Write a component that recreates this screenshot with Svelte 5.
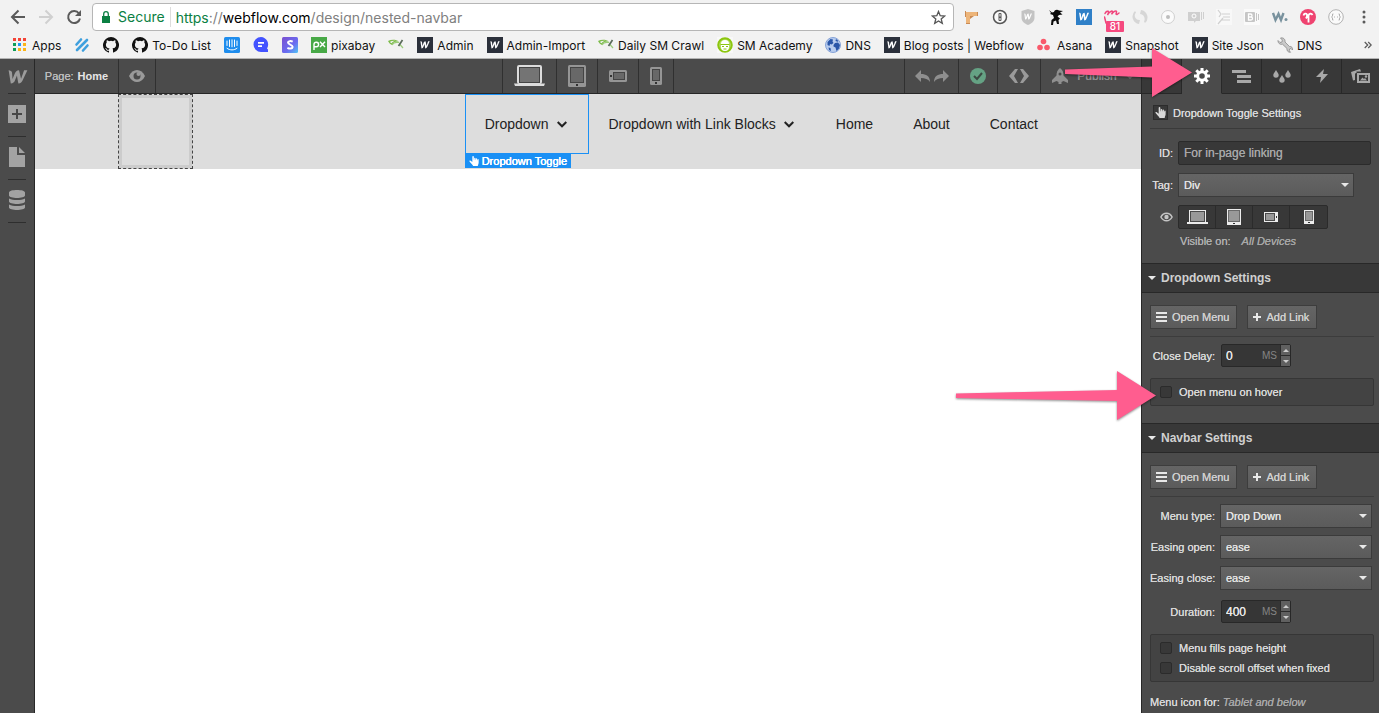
<script lang="ts">
  type Bookmark = { icon: string; label?: string; title: string };

  const bookmarks: Bookmark[] = [
    { icon: 'apps', label: 'Apps', title: 'Apps' },
    { icon: 'stripes', title: 'Help Scout' },
    { icon: 'github', title: 'GitHub' },
    { icon: 'github', label: 'To-Do List', title: 'To-Do List' },
    { icon: 'intercom', title: 'Intercom' },
    { icon: 'chat', title: 'Chat' },
    { icon: 'stripe', title: 'Stripe' },
    { icon: 'pixabay', label: 'pixabay', title: 'pixabay' },
    { icon: 'leaf', title: 'Crawl' },
    { icon: 'webflow', label: 'Admin', title: 'Admin' },
    { icon: 'webflow', label: 'Admin-Import', title: 'Admin-Import' },
    { icon: 'leaf', label: 'Daily SM Crawl', title: 'Daily SM Crawl' },
    { icon: 'academy', label: 'SM Academy', title: 'SM Academy' },
    { icon: 'globe', label: 'DNS', title: 'DNS' },
    { icon: 'webflow', label: 'Blog posts | Webflow', title: 'Blog posts' },
    { icon: 'asana', label: 'Asana', title: 'Asana' },
    { icon: 'webflow', label: 'Snapshot', title: 'Snapshot' },
    { icon: 'webflow', label: 'Site Json', title: 'Site Json' },
    { icon: 'wrench', label: 'DNS', title: 'DNS tools' }
  ];

  const extensions = ['beam', 'onepass', 'shield', 'ninja', 'wblue', 'script', 'swirl', 'disc', 'bubble', 'sheet', 'bold', 'wdot', 'tee', 'braces'];
  const devices = ['laptop', 'tablet', 'landscape', 'phone'];

  let device = $state('laptop');
  let openOnHover = $state(false);
  let fillsHeight = $state(false);
  let disableOffset = $state(false);
  let closeDelay = $state('0');
  let duration = $state('400');
</script>

{#snippet webflowMark(color: string)}
  <path fill={color} d="M15.3 1.2s-2.3 7-2.5 7.6c-.1-.6-1.7-7.6-1.7-7.6-1.9 0-2.9 1.3-3.4 2.7L5.7 9.1c0-.6-.3-5.3-.4-5.8C5.100 2 4 1.200 2.500 1.200L4.300 13c1.900 0 2.900-1.300 3.400-2.700l1.700-4.500c0 .4 1.200 7.200 1.200 7.200 1.900 0 2.900-1.200 3.400-2.600L18 1.200z" />
{/snippet}

{#snippet bookmarkIcon(name: string)}
  <svg class="bm-icon" viewBox="0 0 16 16" aria-hidden="true">
    {#if name === 'apps'}
      <g>
        <path fill="#f44336" d="M1 1h3v3H1zM6 1h3v3H6zM11 1h3v3h-3z" />
        <path fill="#0f9d58" d="M1 6h3v3H1zM1 11h3v3H1z" />
        <path fill="#2196f3" d="M6 6h3v3H6z" />
        <path fill="#fbb417" d="M11 6h3v3h-3zM6 11h3v3H6zM11 11h3v3h-3z" />
      </g>
    {:else if name === 'stripes'}
      <g stroke="#3fa0de" stroke-width="2.600" stroke-linecap="round">
        <path d="M2.500 7.500L7 2.500M3 13L13 3M9 13.500L13.500 8.500" />
      </g>
    {:else if name === 'github'}
      <path fill="#111" d="M8 0a8 8 0 0 0-2.530 15.590c.4.070.550-.170.550-.380v-1.490c-2.230.480-2.700-.950-2.700-.950-.360-.920-.890-1.170-.890-1.170-.730-.500.050-.490.050-.490.810.060 1.230.830 1.230.830.720 1.230 1.880.870 2.340.670.070-.520.280-.870.510-1.070-1.780-.200-3.640-.890-3.640-3.950 0-.870.310-1.590.820-2.150-.080-.200-.360-1.020.080-2.120 0 0 .670-.210 2.200.820a7.600 7.600 0 0 1 4 0c1.530-1.040 2.200-.820 2.200-.820.440 1.100.160 1.920.080 2.120.510.560.820 1.270.820 2.150 0 3.070-1.870 3.750-3.650 3.950.290.250.540.730.540 1.480v2.190c0 .210.150.460.550.380A8 8 0 0 0 8 0z" />
    {:else if name === 'intercom'}
      <rect width="16" height="16" rx="1.500" fill="#1f8ded" />
      <g stroke="#fff" stroke-linecap="round" fill="none">
        <path d="M3 4v4.500M5.500 3v6.500M8 2.800v7M10.500 3v6.500M13 4v4.500M3 11.300c3 2.200 7 2.200 10 0" />
      </g>
    {:else if name === 'chat'}
      <path fill="#4353ff" d="M8 0a7.500 7.500 0 1 0 0 15h7v-2.500l-1-1A7.500 7.500 0 0 0 8 0z" />
      <path fill="#fff" d="M5 5h6v1.800H5zM5 8.200h4V10H5z" />
    {:else if name === 'stripe'}
      <defs>
        <linearGradient id="stripe-fill" x1="0" y1="0" x2="1" y2="1">
          <stop offset="0" stop-color="#7a4fd0" />
          <stop offset=".6" stop-color="#6a6cf0" />
          <stop offset="1" stop-color="#53c6f5" />
        </linearGradient>
      </defs>
      <rect width="16" height="16" rx="1.500" fill="url(#stripe-fill)" />
      <path fill="none" stroke="#fff" stroke-width="2" d="M10.700 4.700C9 3.900 6 3.700 6 5.600c0 2.200 4.600 1.800 4.600 4.200 0 2.200-3.300 2-5.200 1" />
    {:else if name === 'pixabay'}
      <rect width="16" height="16" fill="#48a947" />
      <path fill="none" stroke="#fff" stroke-width="1.400" d="M3 13V7.300a2.300 2.300 0 1 1 2.300 2.500H3M9 4.800l5 5.200M14 4.800L9 10" />
    {:else if name === 'leaf'}
      <path fill="#7dbb4a" d="M0 4C3.500 2 8 2.300 11 4.500 7.500 4 5.500 5 4 8 2 7 1 6 0 4zm2 .7C2.500 5.700 3 6 3.600 6.300 4.500 4.700 6 4 7.500 3.800 5.500 3.500 3.500 3.900 2 4.700z" />
      <path fill="none" stroke="#9ccc7b" stroke-width="1.200" d="M4 8c1.500-3 4-3 7-2.500M11.500 7l3.500 4" />
      <path fill="none" stroke="#5b6b5b" stroke-width="1.700" d="M14.500 3L10.500 9" />
    {:else if name === 'webflow'}
      <rect width="16" height="16" fill="#2b303b" />
      <g transform="translate(1.900 3.600) scale(.6)">{@render webflowMark('#fff')}</g>
    {:else if name === 'academy'}
      <rect width="16" height="16" fill="#f8f8f8" />
      <circle cx="8" cy="8" r="6.800" fill="#b8dd68" stroke="#8cc610" stroke-width="2" />
      <path fill="#fff" d="M4 7a4 4 0 0 1 8 0v3a4 4 0 0 1-8 0z" />
      <path fill="none" stroke="#8cc610" d="M3.500 7.500h9M5 9.500h2M9 9.500h2M6.500 12h3" />
    {:else if name === 'globe'}
      <circle cx="8" cy="8" r="7.500" fill="#b9cdee" stroke="#86a3d8" />
      <path fill="#2a56a8" d="M2.500 5l3-3 2.500.5-.5 2 1 1.500-2 1.500L5 7l-.5 2-2-1zM8.500 8l1.500-2 3-.5 2 2.500-1 3.500-2.500 2.500-1-3.500-2-1zM11 2l2.500 2-1 .8L10.500 4zM3.500 10.500l2 .5.5 3-2-1z" />
    {:else if name === 'asana'}
      <g fill="#f9596b">
        <circle cx="6.500" cy="4.500" r="2.800" /><circle cx="3" cy="10.500" r="2.800" /><circle cx="10" cy="10.500" r="2.800" />
      </g>
    {:else if name === 'wrench'}
      <path fill="#c9c9c9" stroke="#8a8a8a" stroke-width=".8" d="M1 3.500L3 5.500 5 5 5.300 3 3.500 1C6 .3 8.500 2 8 5l4.500 4.500c2-.5 3.500 1.500 3 3.500L14 11.500l-1.500.5-.2 1.800 1.200 1.500C11 15.500 9.500 13.500 10 11.500L5.500 7.200C3 8 .8 6 1 3.500z" />
    {/if}
  </svg>
{/snippet}

{#snippet extensionIcon(name: string)}
  <svg width="16" height="16" viewBox="0 0 16 16" aria-hidden="true">
    {#if name === 'beam'}
      <path fill="#edb57a" d="M1 3h13v4H6v8H2V7H1z" />
      <path fill="#c98a55" d="M1 2h1v6H1zM2 14h4v1H2zM13 3h1v4h-1zM6 7h4l-4 3z" />
    {:else if name === 'onepass'}
      <circle cx="8" cy="8" r="6.500" fill="#fafafa" stroke="#555" stroke-width="1.500" />
      <rect x="6.500" y="4" width="3" height="8" rx="1" fill="#555" />
      <path stroke="#fafafa" d="M8 5v2.500M8 9v2" />
    {:else if name === 'shield'}
      <path fill="#c3c3c3" d="M8 0l6.500 2v6.500c0 4-3 6-6.500 7.500-3.500-1.500-6.500-3.500-6.500-7.500V2z" />
      <g transform="translate(3 4) scale(.5)">{@render webflowMark('#fff')}</g>
    {:else if name === 'ninja'}
      <path fill="#0b0b0b" d="M1 1l3 2.500L6 3C6.500.5 9.500 0 11 1.500l4 .5-3 1.500 2.500 2-3.500.5-1.500 1.500 2.500 2-1.500 1.500.5 4H9l-1-3.500-2.500 1L5 16H3l.5-5L6 9 5 6 2 5l1-1z" />
    {:else if name === 'wblue'}
      <rect width="16" height="16" fill="#2f80c8" />
      <g transform="translate(1.500 3.100) scale(.64)">{@render webflowMark('#fff')}</g>
    {:else if name === 'script'}
      <path fill="none" stroke="#f0457c" stroke-width="1.500" stroke-linecap="round" d="M1 4.500C2 2 4.500 1.500 4.500 3S3.500 6 3.500 6C5 3 8.500.8 8.500 2.800c0 1-1 2.500-1 2.500C9 3 12 .8 12.500 2.500 12.800 4 11 5.500 13 5.500l2-1.500M.5 8l1 4 .5 2" />
    {:else if name === 'swirl'}
      <path fill="#d6d6d6" d="M7 15A7.500 7.500 0 0 1 3 2l1 1.500A4.500 4.500 0 0 0 8 11zM9 1a7.500 7.500 0 0 1 4 13l-1-1.500A5 5 0 0 0 8 5z" />
    {:else if name === 'disc'}
      <circle cx="8" cy="8" r="6.500" fill="#fbfbfb" stroke="#d0d0d0" />
      <circle cx="8" cy="8" r="2" fill="#bdbdbd" />
    {:else if name === 'bubble'}
      <path fill="#cfcfcf" d="M0 3h12v9H8l-2 2v-2H0zM13 3h1v8h-1zM15 3h1v7h-1z" />
      <circle cx="6" cy="7" r="2" fill="none" stroke="#fff" />
    {:else if name === 'sheet'}
      <rect width="16" height="16" fill="#f8f8f8" />
      <path fill="none" stroke="#d0d0d0" stroke-width="1.200" d="M2 1l3 4-2 3M6 5h8M7 8h7M5 11h9M2 15L7 9" />
    {:else if name === 'bold'}
      <rect width="16" height="16" fill="#fafafa" />
      <rect x="1" y="3" width="10" height="10" rx="1" fill="#c6c6c6" />
      <path fill="none" stroke="#fff" stroke-width="1.300" d="M4.500 5h2a1.400 1.400 0 0 1 0 3h-2H7a1.400 1.400 0 0 1 0 3H4.500z" />
      <path stroke="#c6c6c6" d="M12.500 4v8M14.500 5v6" />
    {:else if name === 'wdot'}
      <path fill="none" stroke="#79929e" stroke-width="2.400" d="M1 4l2.500 7L6.500 5l2.500 6 2.500-7" />
      <circle cx="14" cy="10.500" r="1.500" fill="#79929e" />
    {:else if name === 'tee'}
      <circle cx="8" cy="8" r="8" fill="#ef4370" />
      <path fill="none" stroke="#fff" stroke-width="1.800" d="M3.500 6.500C4 4.500 6 4 7 5.500v2l-1 2M12.500 6C11.500 4 9 4.500 8.500 6.500v7" />
    {:else if name === 'braces'}
      <circle cx="8" cy="8" r="7.300" fill="#fafafa" stroke="#b2b2b2" />
      <path fill="none" stroke="#b2b2b2" d="M5.500 5h-1v2l-1 1 1 1v2h1M10.500 5h1v2l1 1-1 1v2h-1M6 8h1M9 8h1" />
    {/if}
  </svg>
{/snippet}

{#snippet topDevice(name: string)}
  {#if name === 'laptop'}
    <svg width="31" height="22" viewBox="0 0 31 22" aria-hidden="true">
      <rect x="4" y="1" width="23" height="17" rx="1" fill="#747474" stroke="#dcdcdc" stroke-width="2" />
      <rect x="5.500" y="2.500" width="20" height="15" fill="none" stroke="#444" />
      <path fill="#dcdcdc" d="M0 18.500h31l-1 2.500H1z" />
    </svg>
  {:else if name === 'tablet'}
    <svg width="18" height="22" viewBox="0 0 18 22" aria-hidden="true">
      <rect width="18" height="22" rx="1.500" fill="#959595" />
      <rect x="2.500" y="2.500" width="13" height="15" fill="#686868" stroke="#444" />
      <rect x="8" y="19" width="2" height="2" fill="#333" />
    </svg>
  {:else if name === 'landscape'}
    <svg width="18" height="12" viewBox="0 0 18 12" aria-hidden="true">
      <rect width="18" height="12" rx="1.500" fill="#959595" />
      <rect x="4.500" y="2.500" width="11" height="7" fill="#686868" stroke="#444" />
      <rect x="1" y="5" width="2" height="2" fill="#333" />
    </svg>
  {:else}
    <svg width="12" height="18" viewBox="0 0 12 18" aria-hidden="true">
      <rect width="12" height="18" rx="1.500" fill="#959595" />
      <rect x="2.500" y="2.500" width="7" height="11" fill="#686868" stroke="#444" />
      <rect x="5" y="15" width="2" height="2" fill="#333" />
    </svg>
  {/if}
{/snippet}

{#snippet panelDevice(name: string)}
  {#if name === 'laptop'}
    <svg width="21" height="14" viewBox="0 0 21 14" aria-hidden="true">
      <path fill="#ececec" d="M2 0h17v12h2v2H0v-2h2z" />
      <rect x="3.500" y="1.500" width="14" height="10" fill="#999" stroke="#4a4a4a" />
    </svg>
  {:else if name === 'tablet'}
    <svg width="14" height="16" viewBox="0 0 14 16" aria-hidden="true">
      <rect width="14" height="16" fill="#ececec" />
      <rect x="1.500" y="1.500" width="11" height="11" fill="#999" stroke="#6a6a6a" />
      <rect x="6" y="14" width="2" height="1" fill="#333" />
    </svg>
  {:else if name === 'landscape'}
    <svg width="14" height="10" viewBox="0 0 14 10" aria-hidden="true">
      <rect width="14" height="10" fill="#ececec" />
      <rect x="1.500" y="1.500" width="9" height="7" fill="#999" stroke="#4a4a4a" />
      <rect x="12" y="4" width="1" height="2" fill="#333" />
    </svg>
  {:else}
    <svg width="10" height="14" viewBox="0 0 10 14" aria-hidden="true">
      <rect width="10" height="14" fill="#ececec" />
      <rect x="1.500" y="1.500" width="7" height="9" fill="#999" stroke="#6a6a6a" />
      <rect x="4" y="12" width="2" height="1" fill="#333" />
    </svg>
  {/if}
{/snippet}

{#snippet panelEye()}
  <svg width="13" height="10" viewBox="0 0 13 10" aria-hidden="true">
    <path fill="none" stroke="#c4c4c4" stroke-width="1.500" d="M.9 5c2.600-5 8.600-5 11.200 0-2.600 5-8.600 5-11.200 0z" />
    <circle cx="6.500" cy="5" r="2.200" fill="#c4c4c4" />
  </svg>
{/snippet}

{#snippet hand(size: number)}
  <svg width={size} height={size} viewBox="0 0 12 12" aria-hidden="true">
    <path fill="currentColor" d="M4 1a.9.900 0 0 1 1.800 0v3.500h.4V3a.8.800 0 0 1 1.600 0v1.500h.4v-1a.8.800 0 0 1 1.600 0v1.500h.4v-.6a.7.700 0 0 1 1.400 0V8c0 1.500-1 2.400-1 4H5C4.500 10.500 1.500 8 .6 6.600c-.5-1 .6-1.600 1.400-.9L4 7.300z" />
  </svg>
{/snippet}

{#snippet caret()}
  <svg class="caret" width="8" height="4" viewBox="0 0 8 4" aria-hidden="true"><path fill="#e8e8e8" d="M0 0h8L4 4z" /></svg>
{/snippet}

{#snippet chevron()}
  <svg width="10" height="7" viewBox="0 0 10 7" aria-hidden="true"><path fill="none" stroke="#222" stroke-width="2" d="M.7 1L5 5.300 9.300 1" /></svg>
{/snippet}

{#snippet menuButtons()}
  <div class="buttons">
    <button class="btn" type="button">
      <svg width="11" height="11" viewBox="0 0 11 11" aria-hidden="true"><path fill="#e8e8e8" d="M0 0h11v2H0zM0 4h11v2H0zM0 8h11v2H0z" /></svg>
      Open Menu
    </button>
    <button class="btn" type="button">
      <svg width="8" height="8" viewBox="0 0 8 8" aria-hidden="true"><path fill="#e8e8e8" d="M3 0h2v3h3v2H5v3H3V5H0V3h3z" /></svg>
      Add Link
    </button>
  </div>
{/snippet}

{#snippet stepper()}
  <span class="steps">
    <button type="button" aria-label="Increase"><svg width="6" height="3" viewBox="0 0 6 3"><path fill="#ccc" d="M0 3h6L3 0z" /></svg></button>
    <button type="button" aria-label="Decrease"><svg width="6" height="3" viewBox="0 0 6 3"><path fill="#ccc" d="M0 0h6L3 3z" /></svg></button>
  </span>
{/snippet}

<div class="window">
  <header class="chrome">
    <div class="toolbar">
      <nav class="history" aria-label="History">
        <button type="button" aria-label="Back"><svg width="16" height="16" viewBox="0 0 16 16"><path fill="none" stroke="#5a5a5a" stroke-width="2" d="M15 8H2.500M8.500 1.500L2 8l6.500 6.500" /></svg></button>
        <button type="button" aria-label="Forward"><svg width="16" height="16" viewBox="0 0 16 16"><path fill="none" stroke="#d0d0d0" stroke-width="2" d="M1 8h12.500M7.500 1.500L14 8l-6.500 6.500" /></svg></button>
        <button type="button" aria-label="Reload"><svg width="16" height="16" viewBox="0 0 16 16"><path fill="none" stroke="#5a5a5a" stroke-width="2" d="M13 4.500A6 6 0 1 0 14 9.500" /><path fill="#5a5a5a" d="M15 1v6H9z" /></svg></button>
      </nav>
      <div class="omnibox">
        <svg width="8" height="12" viewBox="0 0 8 12" aria-hidden="true"><path fill="#0b8043" d="M0 5h8v7H0z" /><path fill="none" stroke="#0b8043" stroke-width="1.300" d="M1.700 5V3a2.300 2.300 0 0 1 4.600 0v2" /></svg>
        <span class="secure">Secure</span>
        <span class="url"><span class="scheme">https</span>://<span class="host">webflow.com</span>/design/nested-navbar</span>
        <button class="star" type="button" aria-label="Bookmark this page"><svg width="15" height="15" viewBox="0 0 15 15"><path fill="none" stroke="#555" stroke-width="1.300" d="M7.500 1.500l1.700 4.200 4.500.3-3.500 2.900 1.100 4.400-3.800-2.400-3.800 2.400 1.100-4.400L1.300 6l4.500-.3z" /></svg></button>
      </div>
      <div class="extensions">
        {#each extensions as name}
          <button type="button" aria-label={name}>
            {@render extensionIcon(name)}
            {#if name === 'script'}<span class="badge">81</span>{/if}
          </button>
        {/each}
        <button type="button" aria-label="Menu"><svg width="16" height="16" viewBox="0 0 16 16"><g fill="#5a5a5a"><circle cx="8" cy="3" r="1.500" /><circle cx="8" cy="8" r="1.500" /><circle cx="8" cy="13" r="1.500" /></g></svg></button>
      </div>
    </div>
    <nav class="bookmarks" aria-label="Bookmarks">
      {#each bookmarks as item}
        <a href="#top" aria-label={item.title}>{@render bookmarkIcon(item.icon)}{#if item.label}<span>{item.label}</span>{/if}</a>
      {/each}
      <button class="more" type="button" aria-label="More bookmarks"><svg width="8" height="8" viewBox="0 0 8 8"><path fill="none" stroke="#5a5a5a" stroke-width="1.200" d="M.7 1l3 3-3 3M4.200 1l3 3-3 3" /></svg></button>
    </nav>
  </header>

  <div class="designer">
    <aside class="rail">
      <button class="logo" type="button" aria-label="Webflow"><svg width="20" height="14" viewBox="2 1 16.500 12.500" preserveAspectRatio="none">{@render webflowMark('#9c9c9c')}</svg></button>
      <button type="button" aria-label="Add element"><svg width="18" height="18" viewBox="0 0 18 18"><path fill="#a3a3a3" d="M0 0h18v18H0z" /><path fill="#474747" d="M8 4h2v4h4v2h-4v4H8v-4H4V8h4z" /></svg></button>
      <button type="button" aria-label="Pages"><svg width="16" height="20" viewBox="0 0 16 20"><path fill="#a3a3a3" d="M0 0h8v8h8v12H0zM10 0l6 6h-6z" /></svg></button>
      <button type="button" aria-label="Collections"><svg width="16" height="20" viewBox="0 0 16 20"><path fill="#a3a3a3" d="M0 2.500C0-.8 16-.8 16 2.500v3c0 3.300-16 3.300-16 0zM0 8.500c4 2 12 2 16 0v3c0 3.300-16 3.300-16 0zM0 14.500c4 2 12 2 16 0v3c0 3.300-16 3.300-16 0z" /></svg></button>
    </aside>

    <main class="work">
      <div class="topbar">
        <div class="group">
          <button class="cell page" type="button">Page: <b>Home</b></button>
          <button class="cell preview" type="button" aria-label="Preview">
            <svg width="16" height="12" viewBox="0 0 16 12"><path fill="#9a9a9a" d="M0 6C3.500-2 12.500-2 16 6c-3.500 8-12.500 8-16 0z" /><circle cx="8" cy="6" r="3.500" fill="#4b4b4b" /><circle cx="9.500" cy="4" r="2" fill="#9a9a9a" /></svg>
          </button>
        </div>
        <div class="group devices">
          {#each devices as name}
            <button class="cell {name}" type="button" aria-label={name} aria-pressed={device === name} onclick={() => (device = name)}>{@render topDevice(name)}</button>
          {/each}
        </div>
        <div class="group actions">
          <button class="cell undo" type="button" aria-label="Undo and redo">
            <svg width="34" height="14" viewBox="0 0 34 14"><path fill="#8f8f8f" d="M0 7l6-6v4c5 0 9 2 9 8-2-3-5-4-9-4v4zM34 7l-6-6v4c-5 0-9 2-9 8 2-3 5-4 9-4v4z" /></svg>
          </button>
          <button class="cell saved" type="button" aria-label="Saved">
            <svg width="16" height="16" viewBox="0 0 16 16"><circle cx="8" cy="8" r="8" fill="#65a284" /><path fill="none" stroke="#3c4a43" stroke-width="2" d="M4 8l3 3 5-6" /></svg>
          </button>
          <button class="cell code" type="button" aria-label="Code">
            <svg width="20" height="14" viewBox="0 0 20 14"><path fill="#9a9a9a" d="M6 0h3L5 7l4 7H6L0 7zM14 0h-3l4 7-4 7h3l6-7z" /></svg>
          </button>
          <button class="cell publish" type="button">
            <svg width="16" height="16" viewBox="0 0 16 16" aria-hidden="true"><path fill="#8f8f8f" d="M8 0c3 2 3.500 5 3.500 7.500L16 12v3l-4.500-2-2 1v2h-3v-2l-2-1L0 15v-3l4.500-4.500C4.500 5 5 2 8 0z" /><circle cx="8" cy="6" r="1.500" fill="#4b4b4b" /></svg>
            Publish
            <svg width="8" height="5" viewBox="0 0 8 5" aria-hidden="true"><path fill="none" stroke="#777" stroke-width="1.500" d="M1 1l3 3 3-3" /></svg>
          </button>
        </div>
      </div>

      <div class="canvas">
        <div class="navbar">
          <div class="container">
            <div class="brand"></div>
            <nav class="links" aria-label="Site">
              <div class="toggle selected">
                Dropdown
                {@render chevron()}
                <span class="tag">{@render hand(10)}Dropdown Toggle</span>
              </div>
              <div class="toggle">
                Dropdown with Link Blocks
                {@render chevron()}
              </div>
              <a href="#home">Home</a>
              <a href="#about">About</a>
              <a href="#contact">Contact</a>
            </nav>
          </div>
        </div>
      </div>
    </main>

    <aside class="panel">
      <div class="tabs">
        <button type="button" aria-label="Style"><svg width="14" height="14" viewBox="0 0 14 14"><path fill="#a8a8a8" d="M14 0L6 7l2 2zM5 8c-3 0-2 4-5 4 3 3 8 1 7-2z" /></svg></button>
        <button class="active" type="button" aria-label="Settings">
          <svg width="16" height="16" viewBox="0 0 16 16">
            <circle cx="8" cy="8" r="4.300" fill="none" stroke="#fff" stroke-width="3" />
            <path stroke="#fff" stroke-width="3" d="M8 0v3M8 13v3M0 8h3M13 8h3M2.300 2.300l2.200 2.200M11.500 11.500l2.200 2.200M2.300 13.700l2.200-2.200M11.500 4.500l2.200-2.200" />
          </svg>
        </button>
        <button type="button" aria-label="Navigator"><svg width="19" height="13" viewBox="0 0 19 13"><path fill="#a8a8a8" d="M0 0h14v3H0zM5 5h14v3H5zM5 10h14v3H5z" /></svg></button>
        <button type="button" aria-label="Style manager"><svg width="18" height="14" viewBox="0 0 18 14"><path fill="#a8a8a8" d="M3 1c1.500 2.500 2.700 3.500 2.700 5a2.700 2.700 0 0 1-5.400 0C.3 4.500 1.500 3.500 3 1zM9 6c1.500 2.500 2.700 3.500 2.700 5a2.700 2.700 0 0 1-5.400 0c0-1.500 1.200-2.500 2.700-5zM15 1c1.500 2.500 2.700 3.500 2.700 5a2.700 2.700 0 0 1-5.400 0c0-1.500 1.200-2.500 2.700-5z" /></svg></button>
        <button type="button" aria-label="Interactions"><svg width="12" height="14" viewBox="0 0 12 14"><path fill="#a8a8a8" d="M8 0L0 8h5l-1 6 8-9H7z" /></svg></button>
        <button type="button" aria-label="Assets"><svg width="19" height="15" viewBox="0 0 19 15"><path fill="#a8a8a8" fill-rule="evenodd" d="M0 3l9-3 1 2.500H5.500V4L4 4.500V11l-2 .5zM6 4h13v10H6zm2 2v6h9V6zM9 11.500l2.500-3L13 10l1-1 2 2.500z" /><circle cx="15" cy="7.500" r="1.200" fill="#a8a8a8" /></svg></button>
        <div class="pointer tabs-pointer"><svg viewBox="0 0 132 54" aria-hidden="true"><path fill="#ff5d8f" d="M2 23.500L89 20.500V2l40 24.500L89 51V31.500L2 28z" /></svg></div>
      </div>

      <section class="element">
        <h1><span class="chip">{@render hand(11)}</span>Dropdown Toggle Settings</h1>
        <div class="row narrow">
          <label for="el-id">ID:</label>
          <input id="el-id" class="text" type="text" placeholder="For in-page linking" />
        </div>
        <div class="row narrow tag-row">
          <label for="el-tag">Tag:</label>
          <span class="select"><select id="el-tag"><option>Div</option></select>{@render caret()}</span>
        </div>
        <div class="row narrow">
          <span class="eye">{@render panelEye()}</span>
          <div class="visibility">
            {#each devices as name}
              <button type="button" aria-label="Visible on {name}">{@render panelDevice(name)}</button>
            {/each}
          </div>
        </div>
        <p class="visible-on">Visible on: <em>All Devices</em></p>
      </section>

      <section>
        <h2><svg width="8" height="4" viewBox="0 0 8 4" aria-hidden="true"><path fill="#e8e8e8" d="M0 0h8L4 4z" /></svg>Dropdown Settings</h2>
        <div class="body">
          {@render menuButtons()}
          <div class="row">
            <label for="delay">Close Delay:</label>
            <span class="number"><input id="delay" type="text" bind:value={closeDelay} /><span class="unit">MS</span>{@render stepper()}</span>
          </div>
          <div class="options">
            <label><input type="checkbox" bind:checked={openOnHover} />Open menu on hover</label>
            <div class="pointer hover-pointer"><svg viewBox="0 0 206 54" aria-hidden="true"><path fill="#ff5d8f" d="M2 24.500L163 21V2l39 24.500L163 51V32L2 29z" /></svg></div>
          </div>
        </div>
      </section>

      <section>
        <h2><svg width="8" height="4" viewBox="0 0 8 4" aria-hidden="true"><path fill="#e8e8e8" d="M0 0h8L4 4z" /></svg>Navbar Settings</h2>
        <div class="body">
          {@render menuButtons()}
          <div class="row">
            <label for="menu-type">Menu type:</label>
            <span class="select"><select id="menu-type"><option>Drop Down</option></select>{@render caret()}</span>
          </div>
          <div class="row">
            <label for="ease-open">Easing open:</label>
            <span class="select"><select id="ease-open"><option>ease</option></select>{@render caret()}</span>
          </div>
          <div class="row">
            <label for="ease-close">Easing close:</label>
            <span class="select"><select id="ease-close"><option>ease</option></select>{@render caret()}</span>
          </div>
          <div class="row spaced">
            <label for="duration">Duration:</label>
            <span class="number"><input id="duration" type="text" bind:value={duration} /><span class="unit">MS</span>{@render stepper()}</span>
          </div>
          <div class="options">
            <label><input type="checkbox" bind:checked={fillsHeight} />Menu fills page height</label>
            <label><input type="checkbox" bind:checked={disableOffset} />Disable scroll offset when fixed</label>
          </div>
          <p class="icon-for">Menu icon for: <em>Tablet and below</em></p>
        </div>
      </section>
    </aside>
  </div>
</div>

<style>
  :global(body) { margin: 0; }
  .window, .window * { box-sizing: border-box; }
  .window {
    display: flex;
    flex-direction: column;
    height: 100vh;
    overflow: hidden;
    font-family: "Liberation Sans", Arial, sans-serif;
    font-size: 11px;
  }
  button, input, select { font: inherit; color: inherit; text-shadow: inherit; margin: 0; padding: 0; border: 0; background: none; border-radius: 0; }
  button { display: flex; align-items: center; justify-content: center; }
  svg { display: block; flex: none; }
  p, h1, h2 { margin: 0; }

  /* Browser chrome */
  .chrome { flex: none; background: #f2f2f2; border-bottom: 1px solid #b4b4b4; font-family: Inter, Roboto, sans-serif; }
  .toolbar { display: flex; align-items: center; height: 34px; }
  .history { display: flex; gap: 12px; padding: 0 10px; }
  .omnibox {
    flex: 1;
    display: flex;
    align-items: center;
    height: 28px;
    padding: 0 7px 0 9px;
    background: #fff;
    border: 1px solid #b6b6b6;
    border-radius: 4px;
    font-size: 14px;
    color: #808080;
  }
  .secure { color: #0b8043; padding: 0 5px 0 8px; line-height: 20px; border-right: 1px solid #ddd; margin-right: 5px; }
  .scheme { color: #0b8043; }
  .host { color: #000; }
  .star { margin-left: auto; }
  .extensions { display: flex; padding: 0 1px 0 4px; }
  .extensions button { position: relative; width: 28px; height: 28px; }
  .badge { position: absolute; left: 8px; bottom: -1px; width: 18px; background: #f5497f; color: #fff; font-size: 10px; line-height: 11px; font-weight: 500; border-radius: 1px; }
  .bookmarks { display: flex; align-items: center; gap: 13px; height: 24px; padding: 0 7px 2px 12px; font-size: 12px; white-space: nowrap; }
  .bookmarks a { display: flex; align-items: center; gap: 4px; color: #111; text-decoration: none; }
  .bm-icon { width: 16px; height: 16px; }
  .more { margin-left: auto; }

  /* Designer frame */
  .designer { flex: 1; min-height: 0; display: grid; grid-template-columns: 35px 1fr 238px; color: #d9d9d9; }
  .rail { background: #4b4b4b; border-right: 1px solid #282828; }
  .rail button { position: relative; width: 100%; height: 43px; padding-bottom: 4px; }
  .rail .logo { height: 35px; padding: 0 0 0 2px; }
  .rail button::after { content: ""; position: absolute; left: 8px; right: 8px; bottom: 0; height: 1px; background: #2e2e2e; }

  .work { display: flex; flex-direction: column; min-width: 0; }
  .topbar { display: grid; grid-template-columns: 1fr auto 1fr; height: 35px; background: #4b4b4b; border-bottom: 1px solid #262626; }
  .group { display: flex; }
  .cell { border-right: 1px solid #303030; }
  .page { width: 84px; gap: 4px; color: #bdbdbd; text-shadow: 0 0 0 currentColor; }
  .page b { color: #e6e6e6; font-weight: 700; text-shadow: none; }
  .preview { width: 37px; }
  .devices { border-left: 1px solid #303030; }
  .devices .cell { width: 41px; }
  .devices .laptop { width: 54px; }
  .devices .phone { width: 35px; }
  .actions { justify-content: flex-end; }
  .undo { width: 55px; border-left: 1px solid #303030; }
  .saved { width: 39px; }
  .code { width: 43px; }
  .publish { width: 100px; gap: 9px; padding-left: 4px; border-right: 0; font-size: 12px; color: #8f8f8f; text-shadow: 0 0 0 currentColor; }

  .canvas { flex: 1; background: #fff; color: #222; }
  .navbar { background: #ddd; }
  .container { display: flex; justify-content: space-between; max-width: 940px; margin: 0 auto; }
  .brand { width: 75px; height: 75px; border: 1px dashed #444; box-shadow: inset 0 0 0 3px #ccc; }
  .links { display: flex; align-items: flex-start; font-size: 14px; line-height: 20px; }
  .links a { padding: 20px; color: #222; text-decoration: none; }
  .toggle { position: relative; display: flex; align-items: center; gap: 8px; padding: 20px 22px 20px 20px; }
  .selected { outline: 1px solid #1a90f5; outline-offset: -1px; }
  .tag {
    position: absolute;
    top: 100%;
    left: 0;
    display: flex;
    align-items: center;
    gap: 3px;
    padding: 0 4px;
    background: #1a90f5;
    color: #fff;
    font-size: 11px;
    line-height: 14px;
    white-space: nowrap;
    text-shadow: 0 0 0 currentColor, 0 0 0 currentColor;
  }

  /* Settings panel */
  .panel { background: #4b4b4b; border-left: 1px solid #282828; text-shadow: 0 0 0 currentColor; }
  .tabs { position: relative; display: grid; grid-template-columns: repeat(5, 40px) 1fr; height: 35px; }
  .tabs button { background: #383838; border-right: 1px solid #282828; border-bottom: 1px solid #282828; }
  .tabs .active { background: #4b4b4b; border-bottom-color: #4b4b4b; }
  .tabs button:last-of-type { border-right: 0; }

  .element { padding: 0 8px 15px; display: flex; flex-direction: column; gap: 8px; }
  h1 { display: flex; align-items: center; gap: 5px; height: 35px; padding: 3px 0 0 3px; margin-bottom: 4px; border-bottom: 1px solid #3a3a3a; font-size: 11px; font-weight: 400; }
  .chip { display: flex; align-items: center; justify-content: center; width: 15px; height: 15px; background: #383838; border: 1px solid #2c2c2c; }
  .row { display: grid; grid-template-columns: 65px 1fr; column-gap: 5px; align-items: center; padding-right: 2px; }
  .row label { text-align: right; white-space: nowrap; }
  .spaced { padding-top: 3px; }
  .narrow { grid-template-columns: 23px 1fr; padding-right: 0; }
  .tag-row { padding-right: 17px; }
  .text { width: 100%; height: 24px; padding: 0 5px; background: #383838; border: 1px solid #2b2b2b; border-radius: 2px; font-size: 12px; }
  .text::placeholder { color: #a6a6a6; opacity: 1; }
  .select { display: grid; align-items: center; }
  .select select { grid-area: 1 / 1; width: 100%; height: 24px; padding: 0 5px; appearance: none; background: linear-gradient(#656565, #5b5b5b); border: 1px solid #3b3b3b; color: #e3e3e3; }
  .select :global(.caret) { grid-area: 1 / 1; justify-self: end; margin-right: 5px; pointer-events: none; }
  .eye { display: flex; justify-content: flex-end; }
  .visibility { display: flex; justify-self: start; background: #383838; border: 1px solid #2b2b2b; border-radius: 2px; }
  .visibility button { width: 37px; height: 22px; border-right: 1px solid #2b2b2b; }
  .visibility button:last-child { border-right: 0; }
  .visible-on { padding-left: 30px; margin-top: -3px; line-height: 14px; color: #b0b0b0; }
  .visible-on em { margin-left: 8px; }

  h2 { display: flex; align-items: center; gap: 5px; height: 30px; padding-left: 6px; background: #383838; border: solid #282828; border-width: 1px 0; font-size: 12px; font-weight: 700; color: #d0d0d0; text-shadow: none; }
  .body { display: flex; flex-direction: column; gap: 7px; padding: 12px 5px 17px 8px; }
  .buttons { display: flex; gap: 10px; padding-bottom: 7px; border-bottom: 1px solid #3c3c3c; }
  .btn { height: 24px; padding: 0 7px 0 5px; gap: 5px; background: linear-gradient(#656565, #5b5b5b); border: 1px solid #3d3d3d; color: #cfcfcf; }
  .number { display: flex; align-items: center; width: 70px; height: 23px; margin-left: 1px; background: #363636; border: 1px solid #282828; border-radius: 2px; }
  .number input { width: 40px; padding-left: 4px; font-size: 12px; color: #e8e8e8; }
  .unit { flex: 1; font-size: 10px; color: #858585; text-shadow: none; }
  .steps { display: grid; gap: 1px; width: 10px; height: 21px; background: #2b2b2b; border-left: 1px solid #2b2b2b; }
  .steps button { background: #606060; }
  .options { position: relative; display: flex; flex-direction: column; gap: 6px; margin-top: 4px; padding: 6px 9px; background: #434343; border: 1px solid #363636; border-radius: 2px; }
  .options label { display: flex; align-items: center; gap: 7px; line-height: 14px; }
  .options input { appearance: none; width: 12px; height: 12px; background: #383838; border: 1px solid #2b2b2b; border-radius: 2px; }
  .options input:checked { background: #1a90f5; }
  .icon-for { margin-top: 6px; line-height: 14px; }
  em { color: #a8a8a8; }

  /* Annotation arrows drawn over the interface */
  .pointer { position: absolute; z-index: 2; pointer-events: none; filter: drop-shadow(0 1px 1px rgba(0, 0, 0, 0.450)); }
  .tabs-pointer { left: -79px; top: -13px; width: 132px; }
  .hover-pointer { right: 213px; top: -10px; width: 206px; }
</style>
